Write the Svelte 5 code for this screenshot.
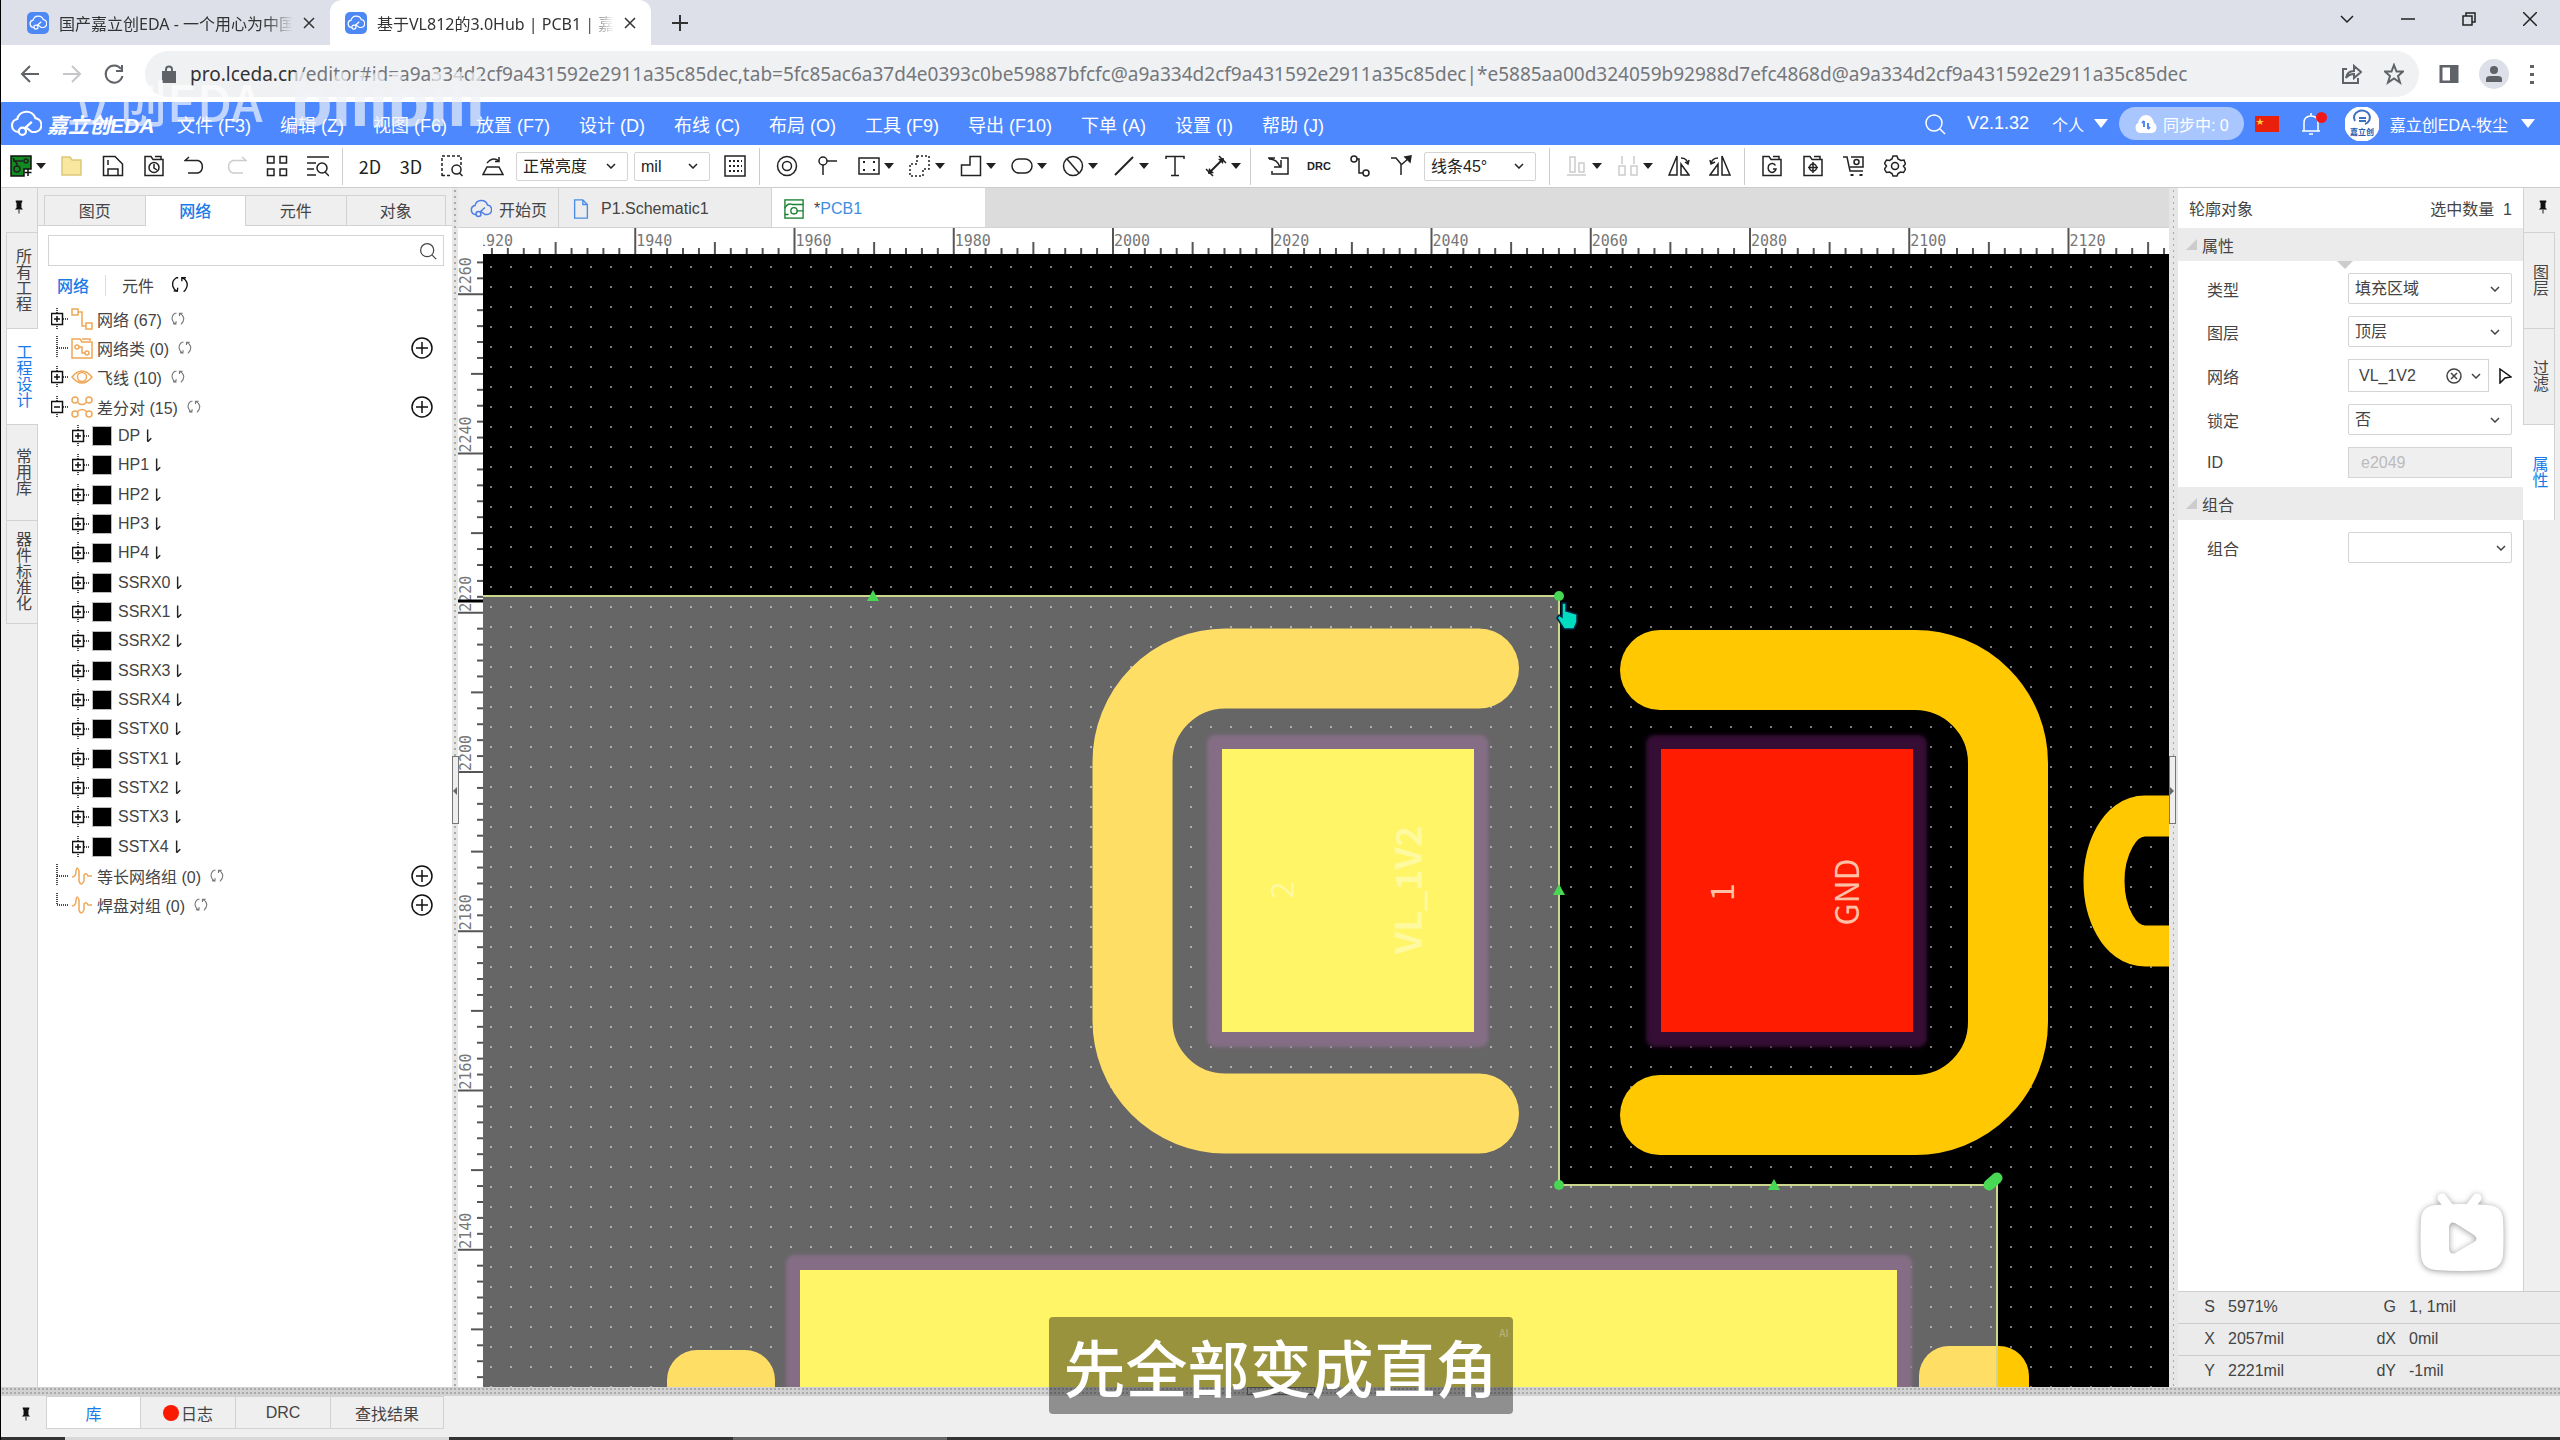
<script lang="ts">
	type Tool = { icon: string; title: string; menu?: boolean; off?: boolean };

	const url = {
		host: 'pro.lceda.cn',
		path: '/editor#id=a9a334d2cf9a431592e2911a35c85dec,tab=5fc85ac6a37d4e0393c0be59887bfcfc@a9a334d2cf9a431592e2911a35c85dec|*e5885aa00d324059b92988d7efc4868d@a9a334d2cf9a431592e2911a35c85dec'
	};

	const menus = ['文件 (F3)', '编辑 (Z)', '视图 (F6)', '放置 (F7)', '设计 (D)', '布线 (C)', '布局 (O)', '工具 (F9)', '导出 (F10)', '下单 (A)', '设置 (I)', '帮助 (J)'];

	const cloud = '<path d="M6 16.500H5.500A4.500 4.500 0 0 1 5 7.600A6.500 6.500 0 0 1 17.500 7A4.800 4.800 0 0 1 17.500 16.500H15L10.500 13"/><circle cx="8.500" cy="16" r="2.500"/><path d="M10 14L15 9.500"/>';
	const folder = '<path d="M2 20.500V1.500H8L10 4.500H20V20.500Z"/><path d="M12 1.500H18V4"/>';

	const icons: Record<string, string> = {
		cloud,
		newpcb: '<path d="M1 1H21V14H14V21H1Z" fill="#128a22" stroke="#111"/><circle cx="7" cy="14" r="3"/><circle cx="16" cy="6" r="2"/><path d="M3 6H9L13 6M7 11V9L3 3" /><path d="M18 14V21M14.500 17.500H21.500" stroke="#111"/>',
		folder: '<path d="M1 20V2H9L11 5H20V20Z" fill="#f9e79f" stroke="#dcc878"/>',
		save: '<path d="M1.500 20.500V1.500H13L20.500 9V20.500Z"/><path d="M6 20V14H16V20M6 5V10"/>',
		history: folder + '<circle cx="11" cy="12.500" r="5"/><path d="M11 9V13L14 15"/>',
		undo: '<path d="M5 2L1 5.500H14A6 6.500 0 0 1 14 18H4"/>',
		redo: '<path d="M17 2L21 5.500H8A6 6.500 0 0 0 8 18H18"/>',
		tiles: '<path d="M1.500 1.500H8V8H1.500ZM14 1.500H20.500V8H14ZM1.500 14H8V20.500H1.500ZM14 14H20.500V20.500H14Z"/>',
		find: '<path d="M0 2H22M0 8H9M0 14H7M0 20H9"/><circle cx="15" cy="13" r="5"/><path d="M18 17L22 21"/>',
		zoomsel: '<path d="M1 21V1H20V10" stroke-dasharray="3 2"/><path d="M1 20.500H9" stroke-dasharray="3 2"/><circle cx="15.500" cy="14.500" r="4.500"/><path d="M18.500 18L21.500 21"/>',
		rotate: '<path d="M5 12H17L21 19.500H1ZM5 8Q11 1 17 6M17 2V6.500H13"/>',
		grid: '<rect x="1" y="1" width="20" height="20"/><path d="M5 6H18M5 11H18M5 16H18" stroke-dasharray="2 2" stroke-width="2"/>',
		via: '<circle cx="11" cy="11" r="9.500"/><circle cx="11" cy="11" r="4.500"/>',
		pin: '<circle cx="6" cy="6" r="4"/><path d="M10 6H20M6 10V20"/>',
		fill: '<rect x="1" y="3" width="20" height="16"/><path d="M5 7H7M15 7H17M5 15H7M15 15H17" stroke-width="2"/>',
		region: '<path d="M8 1H20V14H14V21H1V9H8Z" stroke-dasharray="2 2"/>',
		lshape: '<path d="M10 1.500H20.500V20.500H1.500V10H10Z"/>',
		oval: '<rect x="1" y="4" width="20" height="14" rx="7"/>',
		nosign: '<circle cx="11" cy="11" r="9.500"/><path d="M5 4L17 18"/>',
		line: '<path d="M2 20L20 2" stroke-width="2"/>',
		text: '<path d="M2 4V1.500H20V4M11 1.500V20.500M7 20.500H15"/>',
		measure: '<path d="M4 18L18 4" stroke-width="2"/><path d="M1 14L8 21M14 1L21 8"/><path d="M3 19L4 13L9 18ZM19 3L13 4L18 9Z" fill="#222" stroke="none"/>',
		import: '<path d="M8 3H1V3M14 3H21V19H5V16M2 4Q10 4 13 12M7 12H14V5"/>',
		route: '<circle cx="5" cy="4" r="3"/><circle cx="17" cy="18" r="3"/><path d="M8 4H10V18H14"/>',
		fanout: '<path d="M1 3H6L11 9V20M11 10L19 3"/><path d="M15 2L21 1L20 7Z" fill="#222"/>',
		align: '<path d="M1 20H20M4 2H9V17H4ZM13 8H18V17H13Z"/>',
		spread: '<path d="M5 1V9M17 1V9M2 11H8V20H2ZM14 11H20V20H14Z"/>',
		flip: '<path d="M9 1V20H1ZM13 9V20H21ZM13 3Q19 3 20 9M17 7L20 9L21 5"/>',
		flip2: '<path d="M13 1V20H21ZM9 9V20H1ZM9 3Q3 3 2 9M1 5L2 9L6 7"/>',
		gerber: folder + '<path d="M14.500 10.500A4 4.500 0 1 0 15 14H12"/>',
		place: folder + '<circle cx="11" cy="12.500" r="3.500"/><path d="M11 7V18M6 12.500H16"/>',
		cart: '<path d="M0 2H4L7 16H20M8 2H20V12H7"/><circle cx="13.500" cy="7" r="2.500"/><path d="M9 19V21M18 19V21" stroke-width="3"/>',
		gear: '<circle cx="11" cy="11" r="3.500"/><path d="M9 1H13L14 4L17 5.500L20 5L21.500 9L19.500 11L21.500 14L19.500 17.500L16.500 17L14 18.500L13 21H9L8 18.500L5.500 17L2.500 17.500L0.500 14L2.500 11L0.500 8.500L2.500 5L5.500 5.500L8 4Z"/>',
		sync: '<path d="M9 3H7Q2 6 3 12Q4 16 8 18M4 17.500L8 18L8.500 14M13 3Q18 5 19 10Q19 15 15 18.500M17.500 3L13 3L13 7"/>',
		search: '<circle cx="10" cy="10" r="8"/><path d="M16 16L21 21"/>',
		plus: '<circle cx="11" cy="11" r="10"/><path d="M11 5V17M5 11H17"/>',
		net: '<path d="M1 1H7V7H1ZM15 15H21V21H15ZM7 4H11V18H15"/>',
		netclass: '<path d="M1 21V2H9L11 5H21V21ZM11 2H19V4"/><circle cx="6" cy="10" r="2"/><circle cx="16" cy="16" r="2"/><path d="M8 10H11V16H14"/>',
		eye: '<path d="M1 11Q11 -1 21 11Q11 23 1 11Z"/><circle cx="11" cy="11" r="4.500"/>',
		diff: '<circle cx="4" cy="4" r="3"/><circle cx="18" cy="4" r="3"/><circle cx="4" cy="18" r="3"/><circle cx="18" cy="18" r="3"/><path d="M6 6Q11 11 16 6M6 16Q11 11 16 16"/>',
		wave: '<path d="M1 12Q5 12 5 6Q6 0 8 6V16Q10 22 13 16V10Q15 7 17 11H21"/>',
		down: '<path d="M5 2V19M5 19L10 14" stroke-width="2"/>',
		page: '<path d="M4 1H13L18 6V21H4ZM13 1V6H18"/>',
		pcb: '<rect x="1" y="1" width="20" height="20"/><circle cx="11" cy="13" r="3.500"/><path d="M1 10Q4 4 9 6H21M14 13H21M1 17H5"/>',
		pushpin: '<path d="M7 3H15V5L14 6V12L16 14H6L8 12V6L7 5Z" fill="#111" stroke="none"/><path d="M11 14V19"/>'
	};

	const fileTools: Tool[] = [
		{ icon: 'newpcb', title: '新建', menu: true },
		{ icon: 'folder', title: '打开' },
		{ icon: 'save', title: '保存' },
		{ icon: 'history', title: '历史' },
		{ icon: 'undo', title: '撤销' },
		{ icon: 'redo', title: '重做', off: true },
		{ icon: 'tiles', title: '平铺' },
		{ icon: 'find', title: '查找' }
	];
	const drawTools: Tool[] = [
		{ icon: 'via', title: '过孔' },
		{ icon: 'pin', title: '焊盘' },
		{ icon: 'fill', title: '板框', menu: true },
		{ icon: 'region', title: '区域', menu: true },
		{ icon: 'lshape', title: '填充', menu: true },
		{ icon: 'oval', title: '挖槽', menu: true },
		{ icon: 'nosign', title: '禁止区域', menu: true },
		{ icon: 'line', title: '线条', menu: true },
		{ icon: 'text', title: '文本' },
		{ icon: 'measure', title: '尺寸', menu: true }
	];
	const alignTools: Tool[] = [
		{ icon: 'align', title: '对齐', menu: true, off: true },
		{ icon: 'spread', title: '分布', menu: true, off: true },
		{ icon: 'flip', title: '左右翻转' },
		{ icon: 'flip2', title: '上下翻转' }
	];
	const outputTools: Tool[] = [
		{ icon: 'gerber', title: 'Gerber' },
		{ icon: 'place', title: '坐标文件' },
		{ icon: 'cart', title: '下单' },
		{ icon: 'gear', title: '设置' }
	];

	const pairs = ['DP', 'HP1', 'HP2', 'HP3', 'HP4', 'SSRX0', 'SSRX1', 'SSRX2', 'SSRX3', 'SSRX4', 'SSTX0', 'SSTX1', 'SSTX2', 'SSTX3', 'SSTX4'];
	const tree = [
		{ label: '网络 (67)', icon: 'net', box: '+' },
		{ label: '网络类 (0)', icon: 'netclass', box: '', add: true },
		{ label: '飞线 (10)', icon: 'eye', box: '+' },
		{ label: '差分对 (15)', icon: 'diff', box: '-', add: true },
		...pairs.map((label) => ({ label, icon: '', box: '+', add: false })),
		{ label: '等长网络组 (0)', icon: 'wave', box: '', add: true },
		{ label: '焊盘对组 (0)', icon: 'wave', box: '', add: true, last: true }
	];

	const status = [
		['S', '5971%', 'G', '1, 1mil'],
		['X', '2057mil', 'dX', '0mil'],
		['Y', '2221mil', 'dY', '-1mil']
	];

	// one tick every 2 mil, a label every 20 mil
	const step = 15.925;
	const hTicks = Array.from({ length: 150 }, (_, i) => ({ at: -7 + i * step, n: i, label: 1920 + i * 2 }));
	const vTicks = Array.from({ length: 100 }, (_, i) => ({ at: -119 + i * step, n: i, label: 2280 - i * 2 }));
	const len = (n: number) => (n % 10 === 0 ? 26 : n % 5 === 0 ? 12 : 6);

	let leftTab = $state('网络');
	let net = $state('VL_1V2');
</script>

<svelte:head>
	<title>基于VL812的3.0Hub | PCB1</title>
</svelte:head>

{#snippet icon(name: string, size = 22)}
	<svg class="icon" width={size} height={size} viewBox="0 0 22 22" aria-hidden="true">{@html icons[name]}</svg>
{/snippet}

{#snippet tools(list: Tool[])}
	<div class="tools">
		{#each list as t}
			<button class="tool" class:off={t.off} class:menu={t.menu} aria-label={t.title}>
				{@render icon(t.icon)}
				{#if t.menu}<i class="caret"></i>{/if}
			</button>
		{/each}
	</div>
{/snippet}

{#snippet dropdown(id: string, label: string, value: string)}
	<div class="select">
		<select {id} aria-label={label}><option>{value}</option></select>
		<svg class="chevron" width="10" height="6" viewBox="0 0 10 6"><path d="M1 1L5 5L9 1" /></svg>
	</div>
{/snippet}

{#snippet favicon()}
	<span class="favicon">{@render icon('cloud', 18)}</span>
{/snippet}

<div class="app">
	<header class="browser-tabs">
		<div class="btab">
			{@render favicon()}
			<span class="btitle">国产嘉立创EDA - 一个用心为中国</span>
			<button class="x" aria-label="关闭"><svg width="12" height="12" viewBox="0 0 12 12"><path d="M1 1L11 11M11 1L1 11" /></svg></button>
		</div>
		<div class="btab current">
			{@render favicon()}
			<span class="btitle">基于VL812的3.0Hub | PCB1 | 嘉</span>
			<button class="x" aria-label="关闭"><svg width="12" height="12" viewBox="0 0 12 12"><path d="M1 1L11 11M11 1L1 11" /></svg></button>
		</div>
		<button class="newtab" aria-label="新标签页"><svg width="18" height="18" viewBox="0 0 18 18"><path d="M9 1V17M1 9H17" stroke-width="2" /></svg></button>
		<div class="winctl">
			<button aria-label="标签搜索"><svg width="14" height="14" viewBox="0 0 14 14"><path d="M1 4L7 10L13 4" /></svg></button>
			<button aria-label="最小化"><svg width="14" height="14" viewBox="0 0 14 14"><path d="M0 7H14" /></svg></button>
			<button aria-label="还原"><svg width="14" height="14" viewBox="0 0 14 14"><path d="M1 4H10V13H1ZM4 4V1H13V10H10" /></svg></button>
			<button aria-label="关闭窗口"><svg width="14" height="14" viewBox="0 0 14 14"><path d="M0 0L14 14M14 0L0 14" /></svg></button>
		</div>
	</header>

	<div class="address">
		<button aria-label="后退"><svg width="22" height="22" viewBox="0 0 22 22"><path d="M20 11H3M11 3L3 11L11 19" /></svg></button>
		<button class="dim" aria-label="前进"><svg width="22" height="22" viewBox="0 0 22 22"><path d="M2 11H19M11 3L19 11L11 19" /></svg></button>
		<button aria-label="刷新"><svg width="22" height="22" viewBox="0 0 22 22"><path d="M18 6A8.500 8.500 0 1 0 19.500 13M19 2V8H13" /></svg></button>
		<div class="omnibox">
			<svg class="lock" width="14" height="18" viewBox="0 0 14 18"><path d="M1 7H13V17H1Z" fill="#5f6368" /><path d="M4 7V4.500A3 3 0 0 1 10 4.500V7" /></svg>
			<div class="url"><b>{url.host}</b>{url.path}</div>
			<button aria-label="分享"><svg width="20" height="22" viewBox="0 0 20 22"><path d="M5 6H1V20H16V15M4 15Q5 8 12 8V3L19 9L12 15V11Q7 11 4 15Z" /></svg></button>
			<button aria-label="收藏"><svg width="20" height="22" viewBox="0 0 20 20"><path d="M10 1L12.500 7.500H19L14 12L16 18.500L10 14.500L4 18.500L6 12L1 7.500H7.500Z" /></svg></button>
		</div>
		<button aria-label="侧边栏"><svg width="20" height="18" viewBox="0 0 20 18"><path d="M2 1H18V17H2Z" stroke-width="3" /><path d="M12 1H18V17H12Z" fill="#5f6368" /></svg></button>
		<button class="user" aria-label="用户"><svg width="18" height="18" viewBox="0 0 18 18"><circle cx="9" cy="5" r="4" /><path d="M1 17V14Q1 11 5 11H13Q17 11 17 14V17Z" /></svg></button>
		<button aria-label="菜单"><svg width="6" height="20" viewBox="0 0 6 20"><path d="M3 1V4M3 9V12M3 17V20" stroke-width="4" /></svg></button>
	</div>

	<nav class="menubar">
		<a class="brand" href="#home">{@render icon('cloud', 32)}<span>嘉立创EDA</span></a>
		<div class="menus">
			{#each menus as m}
				<button>{m}</button>
			{/each}
		</div>
		<div class="account">
			<button aria-label="搜索">{@render icon('search')}</button>
			<span class="ver">V2.1.32</span>
			<button class="drop">个人 <i class="caret big"></i></button>
			<button class="syncing">
				<svg width="24" height="20" viewBox="0 0 24 20"><path d="M6 19A5.500 5.500 0 0 1 4 9Q6 1 12 1Q18 1 20 9A5.500 5.500 0 0 1 18 19Z" fill="#fff" /><path d="M10 7V13M8 9L10 7M14 9V15M16 13L14 15" stroke="#4e88ff" fill="none" stroke-width="2" /></svg>
				同步中: 0
			</button>
			<svg class="flag" width="24" height="16" viewBox="0 0 24 16"><rect width="24" height="16" fill="#e8200c" /><path d="M5 2L6 5H9L6.500 6.500L7.500 9L5 7.500L2.500 9L3.500 6.500L1 5H4Z" fill="#ffd23c" /></svg>
			<button class="bell" aria-label="通知">
				<svg width="20" height="24" viewBox="0 0 20 24"><path d="M1 19H19M3 19V11Q3 4 10 4Q17 4 17 11V19M10 4V1M8 22H12" /></svg>
				<i></i>
			</button>
			<button class="drop me">
				<span class="avatar"><svg width="34" height="34" viewBox="0 0 34 34"><circle cx="17" cy="17" r="17" fill="#fff" /><path d="M10 14A8 7 0 1 1 20 17M14 11H21M14 14H21" stroke="#3b6fc4" stroke-width="2" fill="none" /><text x="17" y="28" text-anchor="middle">嘉立创</text></svg></span>
				嘉立创EDA-牧尘 <i class="caret big"></i>
			</button>
		</div>
	</nav>

	<div class="toolbar">
		{@render tools(fileTools)}
		<hr />
		<div class="tools">
			<button class="tool word">2D</button>
			<button class="tool word">3D</button>
			<button class="tool" aria-label="框选缩放">{@render icon('zoomsel')}</button>
			<button class="tool" aria-label="旋转">{@render icon('rotate')}</button>
		</div>
		<div class="pick w112">{@render dropdown('bright', '亮度', '正常亮度')}</div>
		<div class="pick w76">{@render dropdown('unit', '单位', 'mil')}</div>
		<button class="tool grid-btn" aria-label="网格">{@render icon('grid')}</button>
		<hr />
		{@render tools(drawTools)}
		<hr />
		<div class="tools">
			<button class="tool" aria-label="导入">{@render icon('import')}</button>
			<button class="tool drc">DRC</button>
			<button class="tool" aria-label="布线">{@render icon('route')}</button>
			<button class="tool" aria-label="扇出">{@render icon('fanout')}</button>
		</div>
		<div class="pick w112">{@render dropdown('corner', '拐角', '线条45°')}</div>
		<hr />
		{@render tools(alignTools)}
		<hr />
		{@render tools(outputTools)}
	</div>

	<div class="body">
		<aside class="rail">
			<button class="pinbtn" aria-label="固定">{@render icon('pushpin', 18)}</button>
			<button class="vtab">所有工程</button>
			<button class="vtab on">工程设计</button>
			<button class="vtab">常用库</button>
			<button class="vtab tall">器件标准化</button>
		</aside>

		<section class="left">
			<div class="ltabs">
				{#each ['图页', '网络', '元件', '对象'] as t}
					<button class:on={leftTab === t} onclick={() => (leftTab = t)}>{t}</button>
				{/each}
			</div>
			<label class="search">
				<input type="text" aria-label="搜索网络" />
				{@render icon('search', 18)}
			</label>
			<div class="subtabs">
				<button class="on">网络</button>
				<button>元件</button>
				<button aria-label="刷新">{@render icon('sync', 20)}</button>
			</div>
			<ul class="tree">
				{#each tree as row}
					<li class:child={!row.icon}>
						<svg class="twig" width="18" height="28" viewBox="0 0 18 28">
							{#if row.box}
								<path class="dots" d="M6 3V25M12 14H18" />
								<rect x="0.5" y="8.500" width="11" height="11" />
								<path d="M3 14H9" />
								{#if row.box === '+'}<path d="M6 11V17" />{/if}
							{:else}
								<path class="dots" d={row.last ? 'M6 2V14H18' : 'M6 2V24M6 14H18'} />
							{/if}
						</svg>
						{#if row.icon}
							<span class="kind">{@render icon(row.icon)}</span>
						{:else}
							<span class="swatch"></span>
						{/if}
						<span class="name">{row.label}</span>
						<button class="mini" aria-label="操作">{@render icon(row.icon ? 'sync' : 'down', 16)}</button>
						{#if row.add}
							<button class="add" aria-label="新增">{@render icon('plus')}</button>
						{/if}
					</li>
				{/each}
			</ul>
		</section>

		<div class="splitter"><i class="grip left-grip"></i></div>

		<main class="editor">
			<div class="docs">
				<button class="doc home"><span class="blue">{@render icon('cloud', 22)}</span>开始页</button>
				<button class="doc"><span class="sky">{@render icon('page', 20)}</span>P1.Schematic1</button>
				<button class="doc on"><span class="green">{@render icon('pcb', 20)}</span><span>*<em>PCB1</em></span></button>
			</div>
			<div class="stage">
				<div class="corner"></div>
				<svg class="ruler htop">
					{#each hTicks as t}
						<path d="M{t.at} {26 - len(t.n)}V26" />
						{#if t.n % 10 === 0}<text x={t.at + 1} y="18">{t.label}</text>{/if}
					{/each}
				</svg>
				<svg class="ruler vleft">
					{#each vTicks as t}
						<path d="M{25 - len(t.n)} {t.at}H25" />
						{#if t.n % 10 === 0 && t.label > 2120}<text transform="translate(13 {t.at - 1}) rotate(-90)">{t.label}</text>{/if}
					{/each}
					<path class="mark" d="M0 347H25" />
				</svg>
				<svg class="board">
					<defs>
						<pattern id="dots" x="7" y="12" width="20" height="20" patternUnits="userSpaceOnUse">
							<rect width="2" height="2" fill="#7c7c7c" />
						</pattern>
						<filter id="soft"><feGaussianBlur stdDeviation="2" /></filter>
					</defs>
					<rect width="100%" height="100%" fill="#000" />
					<rect width="100%" height="100%" fill="url(#dots)" />
					<g fill="#340a34" filter="url(#soft)">
						<rect x="724" y="481" width="281" height="312" rx="8" />
						<rect x="1163" y="481" width="281" height="312" rx="8" />
						<rect x="303" y="1001" width="1126" height="400" rx="8" />
					</g>
					<g fill="none" stroke="#ffc800" stroke-width="80" stroke-linecap="round">
						<path d="M996 414.500H742A93 93 0 0 0 649.500 507.500V766.500A93 93 0 0 0 742 859.500H996" />
						<path d="M1177 416H1432A93 93 0 0 1 1525 509V768A93 93 0 0 1 1432 861H1177" />
						<path d="M1720 562H1662C1636 562 1621 596 1621 627S1636 692 1662 692H1720" stroke-width="41" />
					</g>
					<g fill="#ffc800">
						<rect x="184" y="1096" width="108" height="100" rx="30" />
						<rect x="1436" y="1092" width="110" height="100" rx="30" />
					</g>
					<rect x="739" y="495" width="252" height="283" fill="#ffee00" />
					<rect x="317" y="1016" width="1097" height="400" fill="#ffee00" />
					<rect x="1178" y="495" width="252" height="283" fill="#ff1c00" />
					<path d="M-9 342H1076V931H1514V2400H-9Z" fill="#fff" fill-opacity="0.4" />
					<g class="padtext">
						<text transform="translate(811 636) rotate(-90)" class="faint">2</text>
						<text transform="translate(939 636) rotate(-90)" class="faint bold">VL_1V2</text>
						<text transform="translate(1251 638) rotate(-90)">1</text>
						<text transform="translate(1376 638) rotate(-90)">GND</text>
					</g>
					<path d="M-9 342H1076V931H1514V2400" fill="none" stroke="#ccd68c" stroke-width="2" />
					<g fill="#48d854">
						<path d="M390 336L396 347H384ZM1076 630L1082 641H1070ZM1291 925L1297 936H1285Z" />
						<circle cx="1076" cy="342" r="5" />
						<circle cx="1076" cy="931" r="5" />
						<path d="M1506 931L1514 924" stroke="#48d854" stroke-width="11" stroke-linecap="round" />
					</g>
					<path d="M1079 349V363L1076 361L1074 364L1081 375H1091L1094 368V360L1090 359L1087 358L1083 357V349Z" fill="#00dcc0" stroke="#024" />
				</svg>
			</div>
		</main>

		<div class="splitter wide"><i class="grip right-grip"></i></div>

		<aside class="right">
			<div class="upper">
				<section class="props">
					<div class="phead"><span>轮廓对象</span><span>选中数量&nbsp; 1</span></div>
					<h3>属性</h3>
					<i class="notch"></i>
					<div class="rows">
						<div class="row"><label for="type">类型</label>{@render dropdown('type', '类型', '填充区域')}</div>
						<div class="row"><label for="layer">图层</label>{@render dropdown('layer', '图层', '顶层')}</div>
						<div class="row net">
							<label for="net">网络</label>
							<div class="combo">
								<input id="net" type="text" bind:value={net} />
								<button aria-label="清除" onclick={() => (net = '')}><svg width="16" height="16" viewBox="0 0 16 16"><circle cx="8" cy="8" r="7" /><path d="M5 5L11 11M11 5L5 11" /></svg></button>
								<svg class="chev" width="10" height="6" viewBox="0 0 10 6"><path d="M1 1L5 5L9 1" /></svg>
							</div>
							<button class="picker" aria-label="拾取"><svg width="14" height="16" viewBox="0 0 14 16"><path d="M2 1L13 9L7 10L2 15Z" /></svg></button>
						</div>
						<div class="row"><label for="lock">锁定</label>{@render dropdown('lock', '锁定', '否')}</div>
						<div class="row"><label for="oid">ID</label><input id="oid" type="text" value="e2049" disabled /></div>
					</div>
					<h3>组合</h3>
					<div class="rows">
						<div class="row last"><label for="group">组合</label>{@render dropdown('group', '组合', '')}</div>
					</div>
				</section>
				<div class="rail rrail">
					<button class="pinbtn" aria-label="固定">{@render icon('pushpin', 18)}</button>
					<button class="vtab">图层</button>
					<button class="vtab">过滤</button>
					<button class="vtab on">属性</button>
				</div>
			</div>
			<table class="status">
				<tbody>
					{#each status as s}
						<tr><th>{s[0]}</th><td>{s[1]}</td><th>{s[2]}</th><td>{s[3]}</td></tr>
					{/each}
				</tbody>
			</table>
			<svg class="tv" width="92" height="92" viewBox="0 0 92 92">
				<path d="M26 13L33 22M61 13L54 22" stroke="#fff" stroke-width="9" stroke-linecap="round" />
				<path fill-rule="evenodd" d="M20 20Q46 18 72 20Q86 21 87 34Q88 53 87 70Q86 83 72 85Q46 87 20 85Q6 84 5 70Q4 53 5 34Q6 21 20 20ZM33 42V64Q34 70 39 68L58 57Q63 54 58 50L39 38Q34 36 33 42Z" fill="#fff" />
			</svg>
		</aside>
	</div>

	<div class="hsplit"><i></i></div>

	<footer class="bottom">
		<button class="pinbtn" aria-label="固定">{@render icon('pushpin', 18)}</button>
		<button class="bt on">库</button>
		<button class="bt"><i class="red"></i>日志</button>
		<button class="bt">DRC</button>
		<button class="bt wide">查找结果</button>
	</footer>
	<div class="taskbar"><i class="light"></i><i class="gray"></i></div>

	<div class="mark-cn">立创EDA</div>
	<div class="mark-bili">bilibili</div>
	<div class="caption">先全部变成直角<small>AI</small></div>
</div>

<style>
	:global(body) {
		margin: 0;
		background: #efefef;
	}

	.app {
		position: relative;
		box-sizing: border-box;
		height: 100vh;
		display: flex;
		flex-direction: column;
		overflow: hidden;
		border-left: 1px solid #000;
		font-family: 'Liberation Sans', 'Noto Sans CJK SC', sans-serif;
		font-size: 16px;
		color: #444;
	}

	.app * {
		box-sizing: border-box;
	}

	button {
		display: flex;
		align-items: center;
		justify-content: center;
		padding: 0;
		border: 0;
		background: none;
		font: inherit;
		color: inherit;
		white-space: nowrap;
	}

	input,
	select {
		font: inherit;
		color: inherit;
		outline: 0;
	}

	svg {
		display: block;
		flex: none;
		fill: none;
		stroke: currentColor;
		stroke-width: 1.5;
	}

	/* browser */
	.browser-tabs {
		flex: none;
		display: flex;
		height: 45px;
		padding-left: 11px;
		background: #dde0e8;
		color: #333;
		font-family: 'Noto Sans', 'Noto Sans CJK SC', sans-serif;
	}

	.btab {
		display: flex;
		align-items: center;
		gap: 10px;
		width: 318px;
		padding: 0 15px;
	}

	.btab.current {
		width: 321px;
		background: #fff;
		border-radius: 12px 12px 0 0;
	}

	.favicon {
		flex: none;
		display: grid;
		place-items: center;
		width: 22px;
		height: 22px;
		border-radius: 5px;
		background: #4e88f5;
		color: #fff;
	}

	.btitle {
		flex: 1;
		overflow: hidden;
		white-space: nowrap;
		mask-image: linear-gradient(90deg, #000 88%, transparent);
	}

	.newtab {
		margin-left: 20px;
	}

	.winctl {
		display: flex;
		align-items: center;
		gap: 47px;
		height: 38px;
		margin-left: auto;
		padding-right: 23px;
		color: #222;
	}

	.address {
		flex: none;
		display: flex;
		align-items: center;
		gap: 20px;
		height: 57px;
		padding: 0 25px 0 18px;
		background: #fff;
		color: #5f6368;
	}

	.address svg {
		stroke-width: 2;
	}

	.address .dim {
		color: #c4c6c9;
	}

	.omnibox {
		flex: 1;
		min-width: 0;
		display: flex;
		align-items: center;
		gap: 22px;
		height: 46px;
		padding: 0 15px 0 17px;
		border-radius: 23px;
		background: #f0f1f3;
	}

	.omnibox .lock {
		margin-right: -8px;
	}

	.url {
		flex: 1;
		overflow: hidden;
		white-space: nowrap;
		font-family: 'Noto Sans', sans-serif;
		font-size: 19px;
		color: #74777b;
	}

	.url b {
		font-weight: 400;
		color: #333;
	}

	.user {
		width: 30px;
		height: 30px;
		border-radius: 50%;
		background: #dde0e8;
	}

	.user svg {
		fill: #5f6368;
		stroke: none;
	}

	/* menu */
	.menubar {
		flex: none;
		display: flex;
		align-items: center;
		height: 43px;
		padding: 0 25px 0 9px;
		background: #4e88ff;
		color: #fff;
	}

	.brand {
		display: flex;
		align-items: center;
		gap: 5px;
		width: 167px;
		color: #fff;
		text-decoration: none;
		font-size: 21px;
		font-style: italic;
		font-weight: 700;
		white-space: nowrap;
	}

	.menus {
		display: flex;
		gap: 29px;
		font-size: 18px;
	}

	.account {
		display: flex;
		align-items: center;
		margin-left: auto;
	}

	.ver {
		margin: 0 23px 0 21px;
		font-size: 18px;
	}

	.caret {
		border: 5px solid transparent;
		border-top: 6px solid #222;
		border-bottom: 0;
	}

	.caret.big {
		margin-left: 10px;
		border-width: 9px 7px 0;
		border-top-color: #fff;
	}

	.syncing {
		gap: 5px;
		height: 33px;
		margin: 0 11px;
		padding: 0 15px;
		border-radius: 17px;
		background: #a9c6ff;
	}

	.syncing svg,
	.flag {
		stroke: none;
	}

	.bell {
		position: relative;
		margin: 0 24px 0 22px;
	}

	.bell i {
		position: absolute;
		top: 0;
		right: -6px;
		width: 11px;
		height: 11px;
		border-radius: 50%;
		background: #f21818;
	}

	.me {
		gap: 3px;
	}

	.avatar {
		margin-right: 8px;
	}

	.avatar text {
		font-size: 8px;
		font-weight: 700;
		fill: #2a5db0;
		stroke: none;
	}

	/* toolbar */
	.toolbar {
		flex: none;
		display: flex;
		align-items: center;
		height: 43px;
		padding-left: 9px;
		background: #fff;
		border-bottom: 1px solid #ccc;
		color: #222;
	}

	.toolbar hr {
		width: 1px;
		height: 37px;
		margin: 0 16px 0 13px;
		border: 0;
		background: #ccc;
	}

	.tools {
		display: flex;
		gap: 19px;
	}

	.tool {
		min-width: 22px;
		height: 26px;
	}

	.tool.menu {
		width: 32px;
		gap: 4px;
		justify-content: flex-start;
	}

	.tool.menu .caret {
		margin-right: -4px;
	}

	.tool.off svg {
		color: #ccc;
	}

	.word {
		width: 22px;
		font-family: 'Noto Sans CJK SC', sans-serif;
		font-size: 18px;
	}

	.drc {
		width: 22px;
		font-size: 11px;
		font-weight: 700;
	}

	.pick {
		margin-left: 12px;
	}

	.pick + .pick {
		margin-left: 6px;
	}

	.pick.w112 {
		width: 112px;
	}

	.pick.w76 {
		width: 76px;
	}

	.grid-btn {
		margin-left: 14px;
	}

	.select {
		position: relative;
		flex: 1;
	}

	.select select {
		width: 100%;
		height: 31px;
		padding: 0 24px 0 6px;
		border: 1px solid #d4d4d4;
		border-radius: 2px;
		background: #fff;
		appearance: none;
	}

	.pick .select select {
		height: 29px;
	}

	.chevron {
		position: absolute;
		right: 12px;
		top: calc(50% - 3px);
	}

	/* panels */
	.body {
		flex: 1;
		min-height: 0;
		display: flex;
		background: #fff;
	}

	.rail {
		flex: none;
		width: 37px;
		display: flex;
		flex-direction: column;
		align-items: flex-end;
		background: #efefef;
		border-right: 1px solid #d2d2d2;
	}

	.pinbtn {
		flex: none;
		width: 24px;
		height: 44px;
		align-self: center;
		padding-bottom: 6px;
	}

	.vtab {
		flex: none;
		width: 31px;
		height: 96px;
		padding-bottom: 2px;
		border: 1px solid #d2d2d2;
		border-right: 0;
		border-bottom: 0;
		writing-mode: vertical-rl;
	}

	.vtab.tall {
		height: 104px;
		border-bottom: 1px solid #d2d2d2;
	}

	.vtab.on {
		margin-right: -1px;
		width: 32px;
		background: #fff;
		color: #1a7ae6;
	}

	.left {
		flex: none;
		width: 414px;
	}

	.ltabs {
		display: grid;
		grid-template-columns: repeat(4, 1fr);
		height: 38px;
		padding: 7px 6px 0;
		background: #efefef;
		box-shadow: inset 0 -1px #d2d2d2;
	}

	.ltabs button {
		padding-bottom: 2px;
		border: 1px solid #d2d2d2;
		border-right: 0;
	}

	.ltabs button:last-child {
		border-right: 1px solid #d2d2d2;
	}

	.ltabs .on,
	.subtabs .on {
		color: #1a7ae6;
		font-weight: 500;
	}

	.ltabs .on {
		border-bottom: 0;
		background: #fff;
	}

	.search {
		display: flex;
		align-items: center;
		height: 31px;
		margin: 9px 8px 0 10px;
		padding-right: 6px;
		border: 1px solid #d4d4d4;
	}

	.search input {
		flex: 1;
		border: 0;
		background: none;
	}

	.subtabs {
		display: flex;
		align-items: center;
		height: 38px;
		padding-left: 19px;
	}

	.subtabs button + button {
		margin-left: 16px;
	}

	.subtabs .on {
		height: 21px;
		padding-right: 16px;
		border-right: 1px solid #ddd;
	}

	.subtabs svg {
		color: #111;
	}

	.tree {
		display: grid;
		grid-template-rows: repeat(21, 1fr);
		height: 616px;
		margin: 0;
		padding: 0;
		list-style: none;
	}

	.tree li {
		display: flex;
		align-items: center;
		padding: 0 19px 0 13px;
	}

	.tree li.child {
		padding-left: 34px;
	}

	.twig {
		stroke: #111;
		stroke-width: 1.5;
	}

	.twig rect {
		fill: #fff;
	}

	.twig .dots {
		stroke-dasharray: 1 1;
	}

	.kind {
		margin: 0 4px 0 2px;
		color: #f0a858;
	}

	.swatch {
		width: 20px;
		height: 20px;
		margin: 0 6px 0 2px;
		border: 1px solid #bbb;
		background: #000;
	}

	.mini {
		margin-left: 8px;
		color: #777;
	}

	.child .mini {
		margin-left: 4px;
		color: #222;
	}

	.add {
		margin-left: auto;
		color: #111;
	}

	.splitter {
		position: relative;
		flex: none;
		width: 6px;
		background: radial-gradient(#aaa 1px, #e6e6e6 1px) 0 0 / 6px 6px;
	}

	.splitter.wide {
		width: 9px;
		background-size: 9px 6px;
	}

	.grip {
		position: absolute;
		top: 568px;
		width: 7px;
		height: 68px;
		border: 1px solid #777;
		background: #eee;
	}

	.grip::after {
		content: '';
		position: absolute;
		top: 30px;
		border: 4px solid transparent;
		border-right-color: #666;
		border-left: 0;
	}

	.right-grip::after {
		border-left: 4px solid #666;
		border-right: 0;
	}

	/* editor */
	.editor {
		flex: 1;
		min-width: 0;
		display: flex;
		flex-direction: column;
	}

	.docs {
		flex: none;
		display: flex;
		height: 40px;
		background: #dcdcdc;
		border-bottom: 1px solid #d2d2d2;
	}

	.doc {
		gap: 10px;
		justify-content: flex-start;
		width: 213px;
		padding: 2px 0 0 12px;
		background: #ededed;
		border-right: 1px solid #d2d2d2;
	}

	.doc.home {
		width: 101px;
		gap: 7px;
	}

	.doc.on {
		background: #fff;
		border: 0;
	}

	.doc em {
		font-style: normal;
		color: #3d8ee0;
	}

	.blue {
		color: #4e7ee8;
	}

	.sky {
		color: #4a90e2;
	}

	.green {
		color: #1c8030;
	}

	.stage {
		flex: 1;
		min-height: 0;
		display: grid;
		grid-template: 26px minmax(0, 1fr) / 25px minmax(0, 1fr);
	}

	.stage svg {
		width: 100%;
		height: 100%;
		overflow: hidden;
		stroke: none;
	}

	.ruler path {
		stroke: #555;
		stroke-width: 2;
	}

	.ruler .mark {
		stroke: #000;
		stroke-width: 3;
	}

	.ruler text {
		font-family: 'DejaVu Sans Mono', monospace;
		font-size: 15px;
		fill: #777;
	}

	.padtext text {
		font-family: 'Noto Sans CJK SC', sans-serif;
		font-size: 32px;
		text-anchor: middle;
		fill: #ffc0a8;
	}

	.padtext .faint {
		fill: #fff9a0;
	}

	.padtext .bold {
		font-size: 36px;
		font-weight: 700;
	}

	/* properties */
	.right {
		position: relative;
		flex: none;
		width: 382px;
		display: flex;
		flex-direction: column;
	}

	.upper {
		flex: 1;
		display: flex;
	}

	.props {
		position: relative;
		flex: 1;
	}

	.phead {
		display: flex;
		justify-content: space-between;
		align-items: center;
		height: 40px;
		padding: 0 11px;
	}

	h3 {
		display: flex;
		align-items: center;
		gap: 5px;
		height: 33px;
		margin: 0;
		padding-left: 8px;
		background: #ebebeb;
		font-size: 16px;
		font-weight: 400;
	}

	h3::before {
		content: '';
		border-left: 11px solid transparent;
		border-bottom: 11px solid #ccc;
	}

	.notch {
		position: absolute;
		top: 73px;
		left: 159px;
		border: 8px solid transparent;
		border-top-color: #ccc;
		border-bottom: 0;
	}

	.rows {
		padding: 6px 11px 3px 29px;
	}

	.row {
		display: flex;
		align-items: center;
		height: 43px;
	}

	.row label {
		width: 141px;
	}

	.row.net {
		height: 45px;
	}

	.row > input {
		width: 164px;
		height: 31px;
		padding-left: 12px;
		border: 1px solid #d4d4d4;
		background: #efefef;
		color: #bbb;
	}

	.row.last .chevron {
		right: 6px;
	}

	.combo {
		display: flex;
		align-items: center;
		width: 141px;
		height: 33px;
		padding-right: 7px;
		border: 1px solid #d4d4d4;
	}

	.combo input {
		width: 98px;
		min-width: 0;
		padding: 0 0 0 10px;
		border: 0;
		background: none;
	}

	.combo .chev {
		margin-left: 9px;
	}

	.picker {
		margin-left: 9px;
		color: #111;
	}

	.rrail {
		width: 38px;
		align-items: flex-start;
		border-right: 0;
		border-left: 1px solid #d2d2d2;
	}

	.rrail .vtab {
		border: 1px solid #d2d2d2;
		border-left: 0;
		border-bottom: 0;
	}

	.rrail .vtab.on {
		margin: 0 0 0 -1px;
	}

	.status {
		flex: none;
		width: 100%;
		height: 96px;
		border-collapse: collapse;
		background: #ebebeb;
		table-layout: fixed;
	}

	.status tr {
		height: 32px;
		border-top: 1px solid #ccc;
	}

	.status th {
		width: 37px;
		padding: 0;
		text-align: right;
		font-weight: 400;
	}

	.status td {
		padding: 0 0 0 13px;
	}

	.status td:nth-child(2) {
		width: 144px;
	}

	.tv {
		position: absolute;
		right: 52px;
		bottom: 110px;
		stroke: none;
		filter: drop-shadow(0 1px 3px rgba(0, 0, 0, 0.4));
	}

	/* bottom */
	.hsplit {
		position: relative;
		flex: none;
		height: 9px;
		background: radial-gradient(#aaa 1px, #d2d2d2 1px) 0 0 / 4px 4px;
	}

	.hsplit i {
		position: absolute;
		left: calc(50% - 34px);
		width: 68px;
		height: 8px;
		border: 1px solid #777;
	}

	.bottom {
		flex: none;
		display: flex;
		align-items: flex-start;
		height: 41px;
		padding-left: 13px;
		background: #efefef;
	}

	.bottom .pinbtn {
		height: 40px;
		margin-right: 8px;
	}

	.bt {
		width: 95px;
		height: 33px;
		border: 1px solid #d2d2d2;
		border-left-width: 0;
	}

	.bt.wide {
		width: 113px;
	}

	.bt.on {
		border-left-width: 1px;
		background: #fff;
		color: #1a7ae6;
	}

	.red {
		width: 16px;
		height: 16px;
		margin-right: 2px;
		border-radius: 50%;
		background: #fa1a00;
	}

	.taskbar {
		flex: none;
		display: flex;
		gap: 284px;
		height: 3px;
		padding-left: 64px;
		background: #333;
	}

	.taskbar .light {
		width: 384px;
		background: #d8d8d8;
	}

	.taskbar .gray {
		width: 214px;
		background: #666;
	}

	/* overlays */
	.mark-cn,
	.mark-bili {
		position: absolute;
		pointer-events: none;
		color: rgba(255, 255, 255, 0.65);
		white-space: nowrap;
	}

	.mark-cn {
		left: 66px;
		top: 68px;
		font: 500 50px / 64px 'Noto Sans CJK SC', sans-serif;
	}

	.mark-bili {
		left: 290px;
		top: 54px;
		font: 900 72px / 88px Lato, sans-serif;
		color: rgba(240, 242, 246, 0.7);
	}

	.caption {
		position: absolute;
		left: 50%;
		bottom: 26px;
		height: 97px;
		padding: 0 15px;
		transform: translateX(-50%);
		border-radius: 4px;
		background: rgba(0, 0, 0, 0.4);
		color: #fff;
		font: 500 62px / 98px 'Noto Sans CJK SC', sans-serif;
		white-space: nowrap;
	}

	.caption small {
		position: absolute;
		top: 10px;
		right: 4px;
		font-size: 10px;
		line-height: 12px;
		color: rgba(255, 255, 255, 0.3);
	}
</style>
